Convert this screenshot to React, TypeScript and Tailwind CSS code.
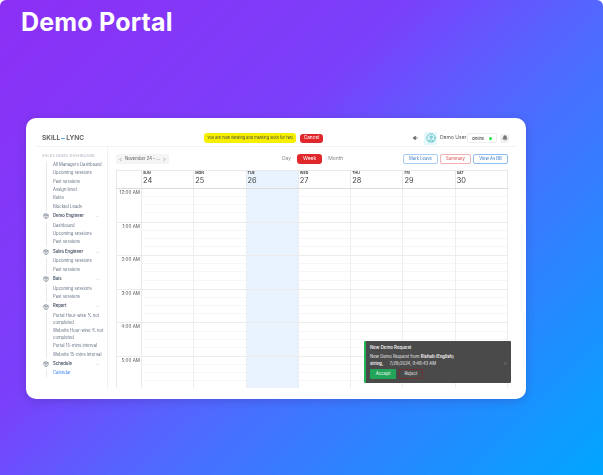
import { Bell, ChevronDown, ChevronLeft, ChevronRight, Package, UserCircle, Volume1, X } from 'lucide-react'

type NavGroup = {
  title: string
  items: string[]
}

const managerItems = ['All Managers Dashboard', 'Upcoming sessions', 'Past sessions', 'Assign level', 'Rules', 'Blocked Leads']

const groups: NavGroup[] = [
  { title: 'Demo Engineer', items: ['Dashboard', 'Upcoming sessions', 'Past sessions'] },
  { title: 'Sales Engineer', items: ['Upcoming sessions', 'Past sessions'] },
  { title: 'Bais', items: ['Upcoming sessions', 'Past sessions'] },
  {
    title: 'Report',
    items: ['Portal Hour-wise % not completed', 'Website Hour-wise % not completed', 'Portal 15-mins interval', 'Website 15-mins interval'],
  },
]

const days = [
  ['SUN', '24'],
  ['MON', '25'],
  ['TUE', '26'],
  ['WED', '27'],
  ['THU', '28'],
  ['FRI', '29'],
  ['SAT', '30'],
]

const hours = ['12:00 AM', '1:00 AM', '2:00 AM', '3:00 AM', '4:00 AM', '5:00 AM']

function NavItem({ label }: { label: string }) {
  return <li className="w-[53px] py-[0.8px] text-[4.2px] leading-[6.8px] text-[#667085]">{label}</li>
}

function NavHeader({ title }: { title: string }) {
  return (
    <div className="flex h-[10px] items-center gap-[4px] text-[#475467]">
      <Package size={6} strokeWidth={1.8} className="ml-[1px]" />
      <span className="w-[38px] text-[4.2px] font-semibold">{title}</span>
      <ChevronDown size={5} className="text-[#b9bdc6]" />
    </div>
  )
}

function Sidebar() {
  return (
    <aside className="w-[72px] shrink-0 border-r border-[#f1f1f3] pl-[6px] pt-[6px]">
      <p className="text-[3.8px] leading-[6px] tracking-[0.2px] text-[#a8adb8]">SALES DEMO DASHBOARD</p>
      <ul className="ml-[4px] mt-[2px] border-l border-[#e8e8ea] pl-[6px]">
        {managerItems.map((item) => (
          <NavItem key={item} label={item} />
        ))}
      </ul>
      {groups.map((group) => (
        <div key={group.title}>
          <NavHeader title={group.title} />
          <ul className="ml-[4px] mt-[0.5px] border-l border-[#e8e8ea] pl-[6px]">
            {group.items.map((item) => (
              <NavItem key={item} label={item} />
            ))}
          </ul>
        </div>
      ))}
      <NavHeader title="Schedule" />
      <p className="ml-[4px] border-l border-[#e8e8ea] pl-[6px] text-[4.2px] leading-[8px] text-[#3b82f6]">Calendar</p>
    </aside>
  )
}

function Calendar() {
  return (
    <div className="mt-[6px] w-[392px] overflow-hidden border-l border-t border-[#e9e9ec]">
      <div className="grid h-[18px] grid-cols-[25px_repeat(7,1fr)] border-b border-[#dcdcdf]">
        <div className="border-r border-[#e9e9ec]" />
        {days.map(([name, date]) => (
          <div key={name} className={`border-r border-[#e9e9ec] pl-[1px] ${date === '26' ? 'bg-[#e9f3fd]' : ''}`}>
            <p className="text-[3.6px] font-semibold leading-[5px] text-[#333]">{name}</p>
            <p className="text-[7.4px] leading-[10px] text-[#444]">{date}</p>
          </div>
        ))}
      </div>
      {hours.map((hour) => (
        <div key={hour} className="grid h-[33.6px] grid-cols-[25px_repeat(7,1fr)] border-b border-[#ececee]">
          <div className="border-r border-[#e9e9ec] pr-[1px] pt-[1px] text-right text-[4.6px] leading-[6px] text-[#555]">{hour}</div>
          {days.map(([name, date]) => (
            <div
              key={name}
              className={`grid grid-rows-4 divide-y border-r border-[#eeeef0] ${date === '26' ? 'divide-[#e9f3fd] bg-[#e9f3fd]' : 'divide-[#f6f6f7]'}`}
            >
              <div />
              <div />
              <div />
              <div />
            </div>
          ))}
        </div>
      ))}
    </div>
  )
}

function Toast() {
  return (
    <div className="absolute left-[338px] top-[223px] flex h-[42px] w-[147px] rounded-[1px] border-l-2 border-[#22b357] bg-[#4a4a4a] pl-[4px] pt-[4px] text-white">
      <div>
        <p className="text-[4.4px] font-medium leading-[6px]">New Demo Request</p>
        <p className="mt-[2px] w-[90px] text-[4.2px] leading-[7px] text-[#e8e8e8]">
          New Demo Request from <b>Rishab (English)</b>
          <br />
          <b>string,</b>
          <span className="ml-[6px]">7/28/2024, 9:48:43 AM</span>
        </p>
        <div className="mt-[2px] flex gap-[3px]">
          <button type="button" className="h-[10px] w-[26px] rounded-[1px] bg-[#22a559] text-[4.4px] text-white">
            Accept
          </button>
          <button type="button" className="h-[10px] w-[24px] rounded-[1px] border border-[#6e3434] text-[4.4px] text-[#e8e8e8]">
            Reject
          </button>
        </div>
      </div>
      <X size={5} className="ml-[43px] mt-[16px] text-[#8a8a8a]" />
    </div>
  )
}

export default function App() {
  return (
    <div className="h-[475px] w-[603px] overflow-hidden rounded-t-[6px] bg-[linear-gradient(135deg,#8c2ff5_0%,#7a40fa_38%,#5565ff_55%,#4670ff_62%,#00a6ff_100%)] pl-[26px] font-['Inter',sans-serif]">
      <h1 className="-ml-[5px] h-[118px] pt-[7px] text-[25px] leading-[30px] font-bold tracking-[0.2px] text-white">Demo Portal</h1>
      <div className="relative h-[281px] w-[500px] rounded-[10px] bg-white px-[10px] pt-[12px] shadow-[0_2px_8px_rgba(60,30,120,0.25)] blur-[0.35px]">
        <header className="flex h-[17px] items-center border-b border-[#f3f3f5]">
          <div className="ml-[6px] flex w-[162px] items-center text-[6.6px] font-semibold leading-none text-[#555]">
            SKILL
            <span className="mx-[1px] h-[1px] w-[4px] bg-[#5aa9e6]" />
            LYNC
          </div>
          <div className="flex h-[10px] w-[92px] items-center justify-center rounded-[3px] bg-[#f6f000] text-[3.9px] text-[#444]">
            You are now viewing and marking slots for two
          </div>
          <button type="button" className="ml-[4px] h-[9px] w-[23px] rounded-[3px] bg-[#e0272b] text-[4.8px] text-white">
            Cancel
          </button>
          <Volume1 size={6} fill="#666" className="ml-[90px] text-[#666]" />
          <div className="ml-[5px] flex size-[13px] items-center justify-center rounded-[2px] bg-[#e4f7fa]">
            <UserCircle size={10} strokeWidth={1.5} className="text-[#27a9b5]" />
          </div>
          <span className="ml-[3px] w-[27px] text-[5px] text-[#555]">Demo User</span>
          <div className="flex h-[10px] w-[30px] items-center justify-between rounded-[2px] border border-[#eceef0] px-[4px] text-[4px] font-medium leading-[8px] text-[#444]">
            <span className="pt-[1px]">Online</span>
            <span className="size-[3px] shrink-0 rounded-full bg-[#19e639]" />
          </div>
          <div className="ml-[3px] flex size-[9px] items-center justify-center rounded-[2px] bg-[#f2f2f4]">
            <Bell size={6} fill="#777" className="text-[#777]" />
          </div>
        </header>
        <div className="flex">
          <Sidebar />
          <main className="pl-[8px] pt-[7px]">
            <div className="flex h-[10px] w-[392px] items-center">
              <div className="flex h-[10px] w-[53px] items-center justify-between rounded-[1px] bg-[#f5f5f6] px-[2px] text-[4.2px] text-[#555]">
                <ChevronLeft size={5} />
                November 24 – ...
                <ChevronRight size={5} />
              </div>
              <span className="ml-[113px] text-[5px] text-[#888]">Day</span>
              <span className="ml-[6px] flex h-[10px] w-[25px] items-center justify-center rounded-[3px] bg-[#e0272b] text-[5px] text-white">
                Week
              </span>
              <span className="ml-[6px] text-[5px] text-[#888]">Month</span>
              <div className="ml-auto flex gap-[2px]">
                <button type="button" className="h-[10px] w-[35px] rounded-[2px] border border-[#a9cdf3] text-[4.2px] text-[#3f7fc4]">
                  Mark Leave
                </button>
                <button type="button" className="h-[10px] w-[31px] rounded-[2px] border border-[#f3b0b0] text-[4.2px] text-[#d9484b]">
                  Summary
                </button>
                <button type="button" className="h-[10px] w-[35px] rounded-[2px] border border-[#8fbdf0] text-[4.2px] text-[#2f74c9]">
                  View As BB
                </button>
              </div>
            </div>
            <div className="h-[224px] overflow-hidden">
              <Calendar />
            </div>
          </main>
        </div>
        <Toast />
      </div>
    </div>
  )
}
